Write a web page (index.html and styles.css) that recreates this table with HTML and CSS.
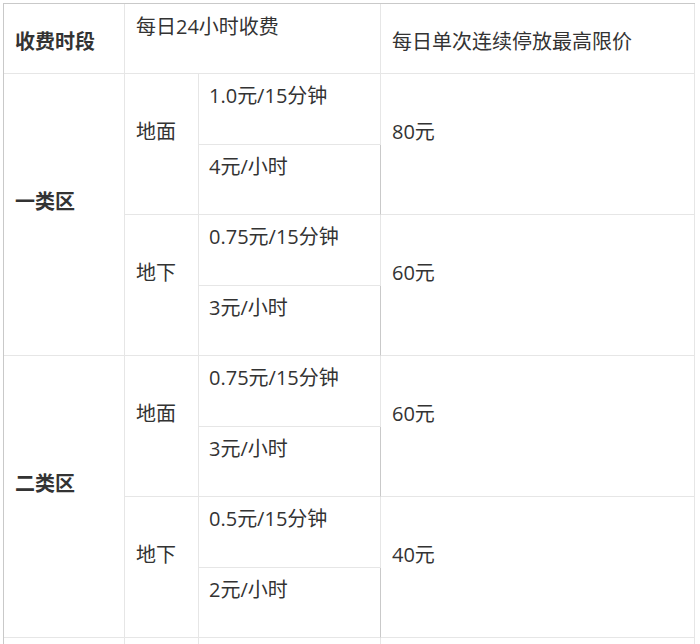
FILE: index.html
```html
<!DOCTYPE html>
<html lang="zh">
<head>
<meta charset="utf-8">
<link rel="stylesheet" href="styles.css">
</head>
<body>
<table class="fees">
  <colgroup>
    <col class="c1"><col class="c2"><col class="c3"><col class="c4">
  </colgroup>
  <tr class="head">
    <th class="label">收费时段</th>
    <th colspan="2" class="top"><p>每日24小时收费</p></th>
    <th class="plain">每日单次连续停放最高限价</th>
  </tr>
  <tr class="sub">
    <td rowspan="4" class="label"><p>一类区</p></td>
    <td rowspan="2"><p>地面</p></td>
    <td class="rate"><p>1.0元/15分钟</p></td>
    <td rowspan="2"><p>80元</p></td>
  </tr>
  <tr class="sub">
    <td class="rate dark"><p>4元/小时</p></td>
  </tr>
  <tr class="sub">
    <td rowspan="2"><p>地下</p></td>
    <td class="rate"><p>0.75元/15分钟</p></td>
    <td rowspan="2"><p>60元</p></td>
  </tr>
  <tr class="sub">
    <td class="rate dark"><p>3元/小时</p></td>
  </tr>
  <tr class="sub">
    <td rowspan="4" class="label"><p>二类区</p></td>
    <td rowspan="2"><p>地面</p></td>
    <td class="rate"><p>0.75元/15分钟</p></td>
    <td rowspan="2"><p>60元</p></td>
  </tr>
  <tr class="sub">
    <td class="rate dark"><p>3元/小时</p></td>
  </tr>
  <tr class="sub">
    <td rowspan="2"><p>地下</p></td>
    <td class="rate"><p>0.5元/15分钟</p></td>
    <td rowspan="2"><p>40元</p></td>
  </tr>
  <tr class="sub">
    <td class="rate dark"><p>2元/小时</p></td>
  </tr>
  <tr class="sub">
    <td></td><td></td><td class="rate"></td><td></td>
  </tr>
</table>
</body>
</html>
```
FILE: styles.css
```css
html, body {
  margin: 0;
  padding: 0;
  background: #fff;
}
body {
  font-family: "Open Sans", "Noto Sans CJK SC", sans-serif;
  font-size: 20px;
  line-height: 24px;
  color: #333;
}
.fees {
  margin: 3px 0 0 3px;
  width: 692px;
  table-layout: fixed;
  border-collapse: separate;
  border-spacing: 0;
  border-top: 1px solid #c9c9c9;
  border-left: 1px solid #c9c9c9;
}
.c1 { width: 121px; }
.c2 { width: 74px; }
.c3 { width: 182px; }
.c4 { width: 314px; }
.fees th, .fees td {
  border-right: 1px solid #e6e6e6;
  border-bottom: 1px solid #e6e6e6;
  padding: 0 0 0 11px;
  text-align: left;
  vertical-align: middle;
  font-weight: normal;
}
.fees p {
  margin: 0 0 25px;
}
.head { height: 70px; }
.sub { height: 70.5px; }
.head th.label, .head th.plain {
  padding-top: 6px;
}
.head th.top p {
  margin-bottom: 24px;
}
.fees .label {
  font-weight: bold;
  padding-left: 11px;
}
.fees .rate {
  padding-left: 10px;
}
.fees .dark {
  border-right-color: #c9c9c9;
}
```
